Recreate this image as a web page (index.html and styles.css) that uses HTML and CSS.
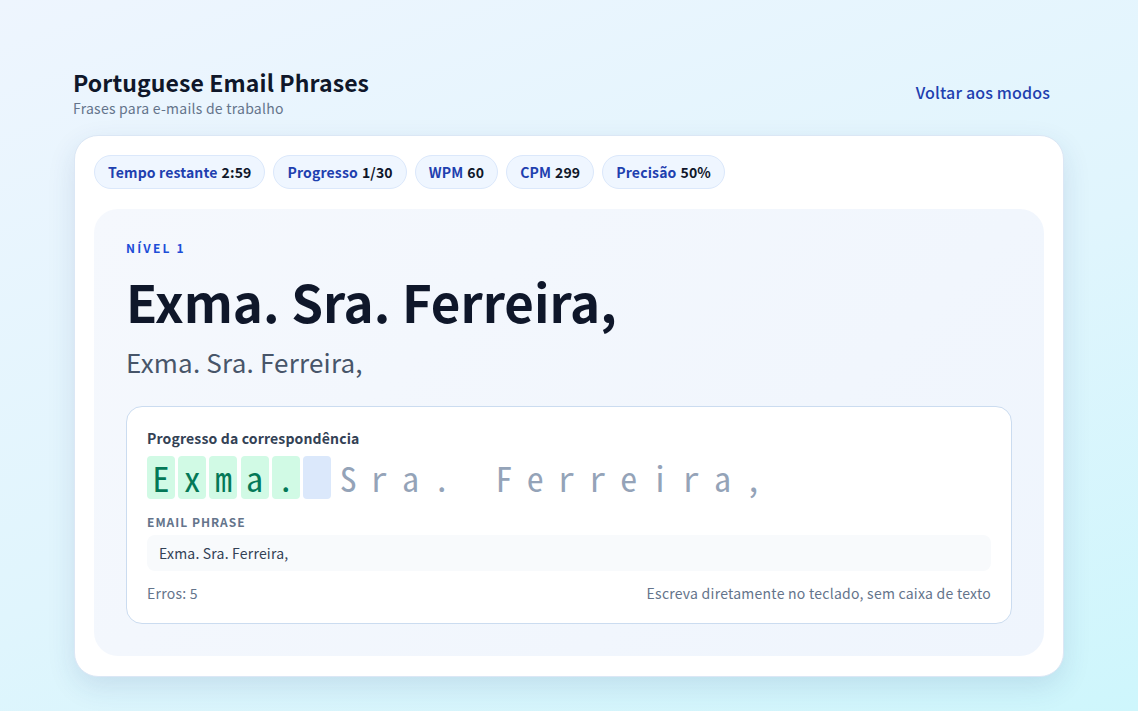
FILE: index.html
```html
<!DOCTYPE html>
<html lang="pt">
<head>
<meta charset="utf-8">
<title>Portuguese Email Phrases</title>
<link rel="stylesheet" href="styles.css">
</head>
<body>
<div class="page">
  <header class="top">
    <div class="titles">
      <h1 class="title">Portuguese Email Phrases</h1>
      <p class="subtitle">Frases para e-mails de trabalho</p>
    </div>
    <a class="back" href="#">Voltar aos modos</a>
  </header>

  <main class="card">
    <div class="pills">
      <span class="pill"><span class="pl">Tempo restante</span><b>2:59</b></span>
      <span class="pill"><span class="pl">Progresso</span><b>1/30</b></span>
      <span class="pill"><span class="pl">WPM</span><b>60</b></span>
      <span class="pill"><span class="pl">CPM</span><b>299</b></span>
      <span class="pill"><span class="pl">Precisão</span><b>50%</b></span>
    </div>

    <section class="panel">
      <div class="level">NÍVEL 1</div>
      <h2 class="phrase">Exma. Sra. Ferreira,</h2>
      <p class="translation">Exma. Sra. Ferreira,</p>

      <div class="box">
        <div class="box-label">Progresso da correspondência</div>
        <div class="chars">
          <span class="ch ok">E</span><span class="ch ok">x</span><span class="ch ok">m</span><span class="ch ok">a</span><span class="ch ok">.</span><span class="ch cur"> </span><span class="ch">S</span><span class="ch">r</span><span class="ch">a</span><span class="ch">.</span><span class="ch"> </span><span class="ch">F</span><span class="ch">e</span><span class="ch">r</span><span class="ch">r</span><span class="ch">e</span><span class="ch">i</span><span class="ch">r</span><span class="ch">a</span><span class="ch">,</span>
        </div>
        <div class="ep-label">EMAIL PHRASE</div>
        <div class="ep">Exma. Sra. Ferreira,</div>
        <div class="foot">
          <span>Erros: 5</span>
          <span>Escreva diretamente no teclado, sem caixa de texto</span>
        </div>
      </div>
    </section>
  </main>
</div>
</body>
</html>
```
FILE: styles.css
```css
* { box-sizing: border-box; }
html, body { margin: 0; padding: 0; }
body {
  min-height: 711px;
  font-family: "Noto Sans CJK JP", "Noto Sans", sans-serif;
  background: linear-gradient(160deg, #eef5fe 0%, #e0f5fd 55%, #cef6fc 100%);
  color: #0f172a;
}
.page {
  width: 992px;
  margin: 0 auto;
  padding-top: 66px;
}
.top {
  display: flex;
  justify-content: space-between;
  align-items: center;
  padding: 0 15px 0 0;
  margin-bottom: 17px;
}
.title {
  margin: 0;
  font-size: 23px;
  font-weight: 700;
  line-height: 32px;
  color: #0f172a;
  letter-spacing: 0.1px;
}
.subtitle {
  margin: 0;
  font-size: 14px;
  line-height: 20px;
  color: #64748b;
  letter-spacing: 0.25px;
}
.back {
  font-size: 16px;
  font-weight: 500;
  color: #1e40af;
  text-decoration: none;
  letter-spacing: 0.15px;
}
.card {
  margin-left: 1px;
  width: 990px;
  background: #ffffff;
  border: 1px solid #dbe7f5;
  border-radius: 24px;
  box-shadow: 0 10px 28px rgba(30, 64, 120, 0.12);
  padding: 19px 19px 20px 19px;
}
.pills {
  display: flex;
  gap: 8px;
  margin-bottom: 20px;
}
.pill {
  display: inline-flex;
  align-items: center;
  gap: 4px;
  height: 34px;
  padding: 0 13px;
  border-radius: 999px;
  background: #eff6ff;
  border: 1px solid #dbe8fb;
  font-size: 14px;
  font-weight: 600;
  color: #0f172a;
  letter-spacing: 0.15px;
}
.pill .pl { color: #1e40af; }
.pill b { font-weight: 600; }
.panel {
  background: linear-gradient(135deg, #f5f8fd 0%, #eff5fd 100%);
  border-radius: 24px;
  padding: 30px 32px 32px 32px;
}
.level {
  font-size: 12px;
  font-weight: 700;
  letter-spacing: 2.2px;
  color: #1d4ed8;
  line-height: 18px;
}
.phrase {
  margin: 12px 0 0 0;
  font-size: 51px;
  font-weight: 700;
  line-height: 64px;
  color: #0f172a;
}
.translation {
  margin: 11px 0 26px 0;
  font-size: 26px;
  line-height: 36px;
  color: #475569;
  letter-spacing: 0.2px;
}
.box {
  background: #ffffff;
  border: 1px solid #cbdcf0;
  border-radius: 16px;
  padding: 21px 20px 20px 20px;
}
.box-label {
  font-size: 14px;
  font-weight: 600;
  color: #334155;
  line-height: 20px;
  letter-spacing: 0.15px;
}
.chars {
  display: flex;
  gap: 3.2px;
  margin-top: 8px;
  font-family: "Noto Sans Mono CJK JP", "DejaVu Sans Mono", monospace;
  font-size: 34px;
}
.ch {
  display: inline-flex;
  justify-content: center;
  align-items: center;
  width: 28px;
  height: 43px;
  border-radius: 4px;
  color: #94a3b8;
  white-space: pre;
}
.ch.ok { background: #d1fae5; color: #047857; }
.ch.cur { background: #dbe8fb; }
.ep-label {
  margin-top: 15px;
  font-size: 12px;
  font-weight: 600;
  letter-spacing: 1px;
  color: #64748b;
  line-height: 16px;
}
.ep {
  margin-top: 5px;
  background: #f8fafc;
  border-radius: 8px;
  padding: 0 12px;
  height: 36px;
  line-height: 36px;
  font-size: 14px;
  color: #334155;
  letter-spacing: 0.2px;
}
.foot {
  display: flex;
  justify-content: space-between;
  margin-top: 12px;
  font-size: 14px;
  line-height: 20px;
  color: #64748b;
  letter-spacing: 0.25px;
}
```
